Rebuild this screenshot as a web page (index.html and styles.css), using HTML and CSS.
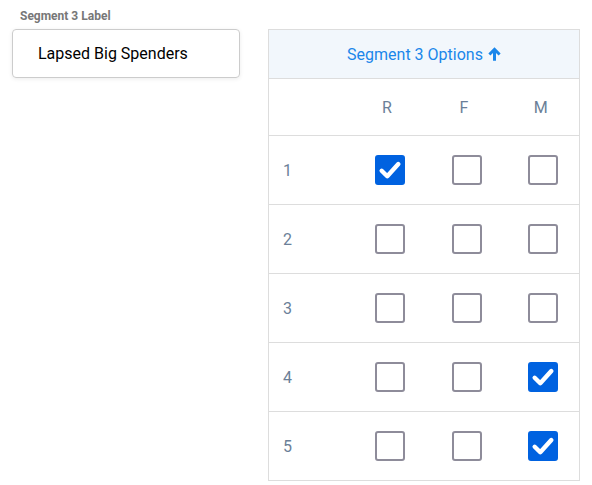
FILE: index.html
```html
<!DOCTYPE html>
<html lang="en">
<head>
    <meta charset="UTF-8">
    <title>Segment 3</title>
    <link rel="stylesheet" href="styles.css">
</head>
<body>
    <div class="page">
        <div class="label-field">
            <label class="field-label" for="segLabel">Segment 3 Label</label>
            <div class="text-input" id="segLabel">Lapsed Big Spenders</div>
        </div>

        <table class="options">
            <colgroup>
                <col class="col-label">
                <col class="col-opt">
                <col class="col-opt">
                <col class="col-opt">
            </colgroup>
            <thead>
                <tr class="options-head">
                    <th colspan="4">
                        Segment 3 Options
                        <svg class="arrow" width="13" height="14" viewBox="0 0 12 13"><path d="M6 0.3 L11.7 6 L9.8 7.9 L7.4 5.5 L7.4 12.7 L4.6 12.7 L4.6 5.5 L2.2 7.9 L0.3 6 Z" fill="#1a86ea"/></svg>
                    </th>
                </tr>
                <tr class="cols">
                    <th class="row-label"></th>
                    <th>R</th>
                    <th>F</th>
                    <th>M</th>
                </tr>
            </thead>
            <tbody>
                <tr>
                    <td class="row-label">1</td>
                    <td><span class="box checked"><svg viewBox="0 0 20 20"><path d="M3.6 10.6 L7.9 14.8 L16.4 5.4" /></svg></span></td>
                    <td><span class="box"></span></td>
                    <td><span class="box"></span></td>
                </tr>
                <tr>
                    <td class="row-label">2</td>
                    <td><span class="box"></span></td>
                    <td><span class="box"></span></td>
                    <td><span class="box"></span></td>
                </tr>
                <tr>
                    <td class="row-label">3</td>
                    <td><span class="box"></span></td>
                    <td><span class="box"></span></td>
                    <td><span class="box"></span></td>
                </tr>
                <tr>
                    <td class="row-label">4</td>
                    <td><span class="box"></span></td>
                    <td><span class="box"></span></td>
                    <td><span class="box checked"><svg viewBox="0 0 20 20"><path d="M3.6 10.6 L7.9 14.8 L16.4 5.4" /></svg></span></td>
                </tr>
                <tr>
                    <td class="row-label">5</td>
                    <td><span class="box"></span></td>
                    <td><span class="box"></span></td>
                    <td><span class="box checked"><svg viewBox="0 0 20 20"><path d="M3.6 10.6 L7.9 14.8 L16.4 5.4" /></svg></span></td>
                </tr>
            </tbody>
        </table>
    </div>
</body>
</html>
```

FILE: styles.css
```css
/* Reset */
* {
    margin: 0;
    padding: 0;
    box-sizing: border-box;
}

body {
    font-family: 'Roboto', sans-serif;
    background-color: #fff;
    color: #000;
}

.page {
    display: flex;
    align-items: flex-start;
    padding: 8px 12px 0;
}

/* Label field */
.label-field {
    width: 228px;
}

.field-label {
    display: block;
    font-size: 12px;
    line-height: 16px;
    font-weight: 700;
    color: #777;
    padding-left: 8px;
    margin-bottom: 5px;
}

.text-input {
    height: 49px;
    border: 1px solid #ccc;
    border-radius: 4px;
    box-shadow: 0 1px 4px rgba(0, 0, 0, 0.08);
    padding-left: 25px;
    font-size: 16px;
    line-height: 47px;
}

/* Options table */
.options {
    margin-left: 28px;
    margin-top: 21px;
    width: 312px;
    table-layout: fixed;
    border-collapse: collapse;
    border: 1px solid #ddd;
}

.col-label {
    width: 80px;
}

.options-head th {
    height: 49px;
    background-color: #f2f7fc;
    color: #1a86ea;
    font-size: 16px;
    font-weight: 400;
    text-align: center;
    border-bottom: 1px solid #ddd;
}

.arrow {
    vertical-align: -1px;
    margin-left: 1px;
}

.cols th {
    height: 57px;
    font-size: 16px;
    font-weight: 400;
    color: #6b7f98;
    text-align: center;
}

tbody tr {
    border-top: 1px solid #ddd;
}

tbody td {
    height: 69px;
    text-align: center;
    vertical-align: middle;
    padding-left: 5px;
}

tbody td.row-label {
    text-align: left;
    padding-left: 14px;
    font-size: 16px;
    color: #6b7f98;
}

.box {
    display: inline-block;
    width: 30px;
    height: 30px;
    border: 2px solid #8e8c9a;
    border-radius: 3px;
    vertical-align: middle;
}

.box.checked {
    background-color: #0062e0;
    border-color: #0062e0;
}

.box svg {
    display: block;
    width: 26px;
    height: 26px;
}

.box svg path {
    fill: none;
    stroke: #fff;
    stroke-width: 3.4;
    stroke-linecap: round;
    stroke-linejoin: round;
}
```
